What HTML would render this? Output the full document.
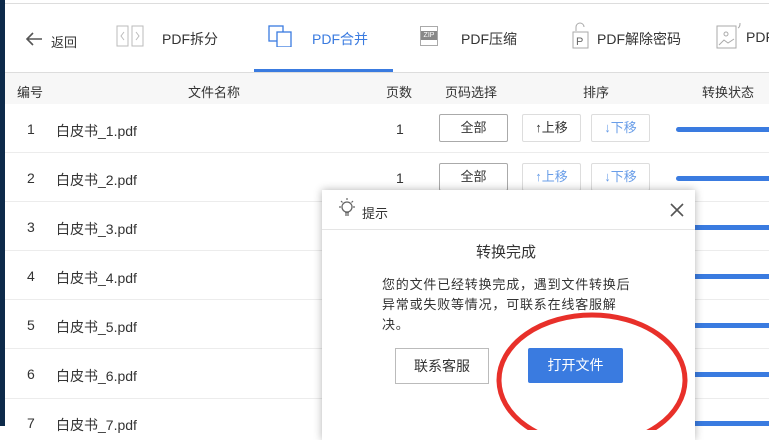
<!DOCTYPE html>
<html><head><meta charset="utf-8"><style>
*{margin:0;padding:0;box-sizing:border-box}
body{width:769px;height:426px;overflow:hidden;background:#fff;font-family:"Liberation Sans","Noto Sans CJK SC",sans-serif;color:#333;position:relative}
.a{position:absolute}
.strip{left:0;top:0;width:5px;height:426px;background:#0d2a4a}
.t{font-size:14px;white-space:nowrap}
.row{left:5px;width:764px;height:1px;background:#ececec}
.btn{border:1px solid #ccc;border-radius:2px;font-size:13px;text-align:center;line-height:26px;height:28px}
.bar{height:5px;background:#3a7be0;border-radius:3px;left:676px;width:100px}
</style></head><body>
<div class="a strip"></div>
<div class="a" style="left:5px;top:3px;width:764px;height:1px;background:#ddd"></div>
<svg class="a" style="left:24px;top:30px" width="20" height="18"><path d="M18 9H3M9 3L3 9l6 6" stroke="#555" stroke-width="1.6" fill="none"/></svg>
<div class="a t" style="left:51px;top:32px;font-size:13px">返回</div>
<svg class="a" style="left:116px;top:25px" width="30" height="22"><rect x="1" y="1" width="11" height="20" fill="none" stroke="#bbb"/><rect x="16" y="1" width="11" height="20" fill="none" stroke="#bbb"/><path d="M8 7l-3 4 3 4M20 7l3 4-3 4" stroke="#bbb" fill="none"/></svg>
<div class="a t" style="left:162px;top:29px">PDF拆分</div>
<svg class="a" style="left:268px;top:25px" width="26" height="22"><rect x="1" y="1" width="14" height="15" fill="#fff" stroke="#3a7be0" stroke-width="1.3"/><rect x="9" y="7" width="14" height="15" fill="#fff" stroke="#3a7be0" stroke-width="1.3"/></svg>
<div class="a t" style="left:312px;top:29px;color:#3a7be0">PDF合并</div>
<div class="a" style="left:254px;top:69px;width:139px;height:3px;background:#3a7be0"></div>
<div class="a" style="left:420px;top:26px;width:18px;height:20px;border:1px solid #aaa;font-size:7px;line-height:18px;text-align:center;color:#fff;"><div style="background:#888;margin-top:4px;line-height:9px">ZIP</div></div>
<div class="a t" style="left:461px;top:29px">PDF压缩</div>
<svg class="a" style="left:571px;top:22px" width="20" height="28"><path d="M5 9V5a4 4 0 0 1 8 0" stroke="#aaa" fill="none"/><rect x="2" y="10" width="15" height="16" fill="none" stroke="#aaa"/><text x="5" y="23" font-size="11" fill="#666" font-family="Liberation Sans">P</text></svg>
<div class="a t" style="left:597px;top:29px">PDF解除密码</div>
<svg class="a" style="left:716px;top:22px" width="30" height="28"><rect x="1" y="4" width="19" height="22" fill="none" stroke="#aaa"/><circle cx="10" cy="12" r="2" fill="none" stroke="#aaa"/><path d="M3 23l5-5 4 3 6-4M22 6c2-1 2-3 2-5" stroke="#aaa" fill="none"/></svg>
<div class="a t" style="left:746px;top:29px">PDF</div>
<div class="a" style="left:5px;top:72px;width:764px;height:1px;background:#ddd"></div>
<div class="a" style="left:5px;top:73px;width:764px;height:31px;background:#f7f7f7"></div>
<div class="a t" style="left:17px;top:82px;font-size:13px">编号</div>
<div class="a t" style="left:188px;top:82px;font-size:13px">文件名称</div>
<div class="a t" style="left:386px;top:82px;font-size:13px">页数</div>
<div class="a t" style="left:445px;top:82px;font-size:13px">页码选择</div>
<div class="a t" style="left:583px;top:82px;font-size:13px">排序</div>
<div class="a t" style="left:702px;top:82px;font-size:13px">转换状态</div>
<div class="a row" style="top:152px"></div><div class="a row" style="top:201px"></div><div class="a row" style="top:250px"></div><div class="a row" style="top:299px"></div><div class="a row" style="top:348px"></div><div class="a row" style="top:398px"></div>
<div class="a t" style="left:27px;top:121px">1</div><div class="a t" style="left:56px;top:121px">白皮书_1.pdf</div>
<div class="a t" style="left:27px;top:170px">2</div><div class="a t" style="left:56px;top:170px">白皮书_2.pdf</div>
<div class="a t" style="left:27px;top:219px">3</div><div class="a t" style="left:56px;top:219px">白皮书_3.pdf</div>
<div class="a t" style="left:27px;top:268px">4</div><div class="a t" style="left:56px;top:268px">白皮书_4.pdf</div>
<div class="a t" style="left:27px;top:317px">5</div><div class="a t" style="left:56px;top:317px">白皮书_5.pdf</div>
<div class="a t" style="left:27px;top:366px">6</div><div class="a t" style="left:56px;top:366px">白皮书_6.pdf</div>
<div class="a t" style="left:27px;top:415px">7</div><div class="a t" style="left:56px;top:415px">白皮书_7.pdf</div>
<div class="a t" style="left:396px;top:121px">1</div><div class="a t" style="left:396px;top:170px">1</div>
<div class="a btn" style="left:439px;top:114px;width:69px;border-color:#aaa">全部</div>
<div class="a btn" style="left:522px;top:114px;width:59px;border-color:#ddd">↑上移</div>
<div class="a btn" style="left:591px;top:114px;width:59px;border-color:#ddd;color:#6a9ee8">↓下移</div>
<div class="a btn" style="left:439px;top:163px;width:69px;border-color:#aaa">全部</div>
<div class="a btn" style="left:522px;top:163px;width:59px;border-color:#ddd;color:#6a9ee8">↑上移</div>
<div class="a btn" style="left:591px;top:163px;width:59px;border-color:#ddd;color:#6a9ee8">↓下移</div>
<div class="a bar" style="top:127px"></div><div class="a bar" style="top:176px"></div><div class="a bar" style="top:225px"></div><div class="a bar" style="top:274px"></div><div class="a bar" style="top:323px"></div><div class="a bar" style="top:372px"></div><div class="a bar" style="top:421px"></div>
<div class="a" style="left:322px;top:190px;width:373px;height:250px;background:#fff;box-shadow:0 0 8px rgba(0,0,0,.3)"></div>
<svg class="a" style="left:336px;top:196px" width="22" height="24"><circle cx="11" cy="11" r="5" fill="none" stroke="#666" stroke-width="1.3"/><path d="M9 17h4M9 19h4M11 2v2M3 11h2M17 11h2M5 5l1.5 1.5M17 5l-1.5 1.5" stroke="#666" stroke-width="1.2"/></svg>
<div class="a t" style="left:362px;top:203px;font-size:13px">提示</div>
<svg class="a" style="left:669px;top:202px" width="16" height="16"><path d="M2 2l12 12M14 2L2 14" stroke="#555" stroke-width="1.6"/></svg>
<div class="a" style="left:322px;top:229px;width:373px;height:1px;background:#e5e5e5"></div>
<div class="a t" style="left:476px;top:241px;font-size:15px">转换完成</div>
<div class="a" style="left:382px;top:275px;width:256px;font-size:13px;line-height:20px;letter-spacing:0.8px">您的文件已经转换完成，遇到文件转换后异常或失败等情况，可联系在线客服解决。</div>
<div class="a" style="left:395px;top:348px;width:94px;height:36px;border:1px solid #bbb;font-size:14px;text-align:center;line-height:34px">联系客服</div>
<div class="a" style="left:528px;top:348px;width:95px;height:35px;background:#3a7be0;color:#fff;font-size:14px;text-align:center;line-height:35px;border-radius:2px">打开文件</div>
<svg class="a" style="left:495px;top:305px" width="200" height="125"><ellipse cx="97" cy="75" rx="93" ry="65" fill="none" stroke="#e8302a" stroke-width="5"/></svg>
</body></html>
